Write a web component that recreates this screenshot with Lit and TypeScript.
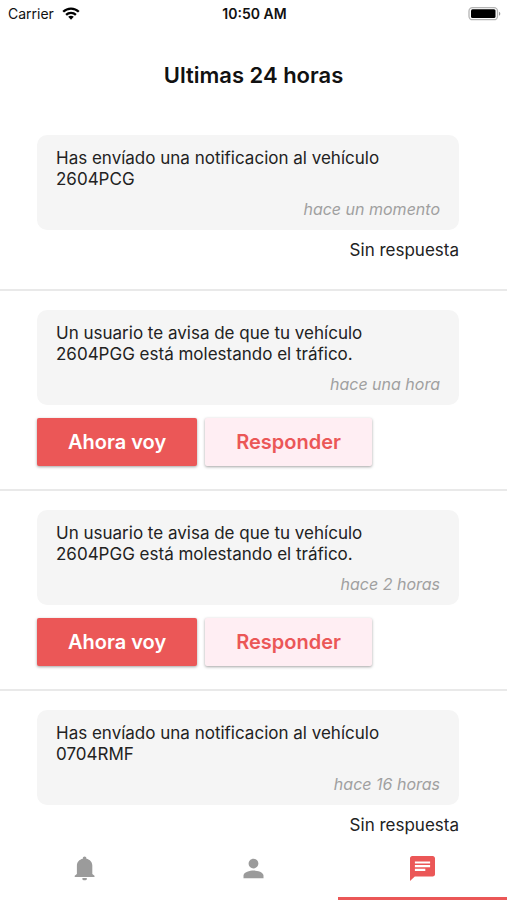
import { LitElement, html, css, svg, nothing } from "lit";
import { customElement, property, state } from "lit/decorators.js";
import { classMap } from "lit/directives/class-map.js";

interface Notice {
  text: string;
  when: string;
  received: boolean;
}

const NOTICES: Notice[] = [
  { text: "Has envíado una notificacion al vehículo 2604PCG", when: "hace un momento", received: false },
  { text: "Un usuario te avisa de que tu vehículo 2604PGG está molestando el tráfico.", when: "hace una hora", received: true },
  { text: "Un usuario te avisa de que tu vehículo 2604PGG está molestando el tráfico.", when: "hace 2 horas", received: true },
  { text: "Has envíado una notificacion al vehículo 0704RMF", when: "hace 16 horas", received: false },
];

@customElement("status-bar")
export class StatusBar extends LitElement {
  static styles = css`
    :host {
      display: grid;
      grid-template-columns: 1fr auto 1fr;
      align-items: center;
      height: 28px;
      padding: 0 6px 0 8px;
      font-size: 14px;
      line-height: 20px;
      color: #111;
    }
    .carrier {
      display: flex;
      align-items: center;
      gap: 8px;
    }
    .time {
      font-weight: 600;
    }
    .battery {
      justify-self: end;
      display: block;
    }
    .wifi {
      display: block;
    }
  `;

  render() {
    return html`
      <div class="carrier">
        <span>Carrier</span>
        <svg class="wifi" width="18" height="14" viewBox="0 0 18 14" fill="none" stroke="#000" stroke-width="2.3" aria-hidden="true">
          <path d="M1.2 4.8C5.5 .5 12.5 .5 16.8 4.8" />
          <path d="M4.1 7.8C6.8 5.2 11.2 5.2 13.9 7.8" />
          <path d="M9 12.7L6.2 9.8C7.7 8.4 10.3 8.4 11.8 9.8Z" fill="#000" stroke="none" />
        </svg>
      </div>
      <span class="time">10:50 AM</span>
      <svg class="battery" width="33" height="14" viewBox="0 0 33 14" aria-hidden="true">
        <rect x="1" y="0.7" width="28.5" height="12" rx="3.5" fill="#fff" stroke="#b4b4b4" stroke-width="1.3" />
        <rect x="3" y="2.2" width="24.5" height="8.9" rx="1.5" fill="#000" />
        <path d="M31 4.7C32.8 5.3 32.8 8.1 31 8.7Z" fill="#999" />
      </svg>
    `;
  }
}

@customElement("notice-item")
export class NoticeItem extends LitElement {
  @property({ attribute: false }) notice!: Notice;

  static styles = css`
    :host {
      display: block;
      padding: 19px 48px 23px 37px;
      font-size: 17px;
      line-height: 21px;
      color: #222;
    }
    .card {
      padding: 13px 19px 10px;
      border-radius: 10px;
      background: #f5f5f5;
    }
    .text {
      margin: 0;
    }
    .when {
      display: block;
      margin-top: 9px;
      text-align: right;
      font-size: 16px;
      font-style: italic;
      color: #a0a0a0;
    }
    .answer {
      margin: 10px 0 5px;
      text-align: right;
    }
    .actions {
      display: flex;
      flex-wrap: wrap;
      gap: 8px;
      margin-top: 13px;
    }
    .button {
      height: 48px;
      padding: 0 31px;
      border: 0;
      border-radius: 2px;
      font: inherit;
      font-size: 20px;
      font-weight: 600;
      box-shadow: 0 1px 3px rgba(0, 0, 0, 0.36);
      cursor: pointer;
    }
    .primary {
      background: #eb5757;
      color: #fff;
    }
    .secondary {
      background: #ffeef3;
      color: #eb5757;
    }
  `;

  render() {
    const { text, when, received } = this.notice;
    return html`
      <article class="card">
        <p class="text">${text}</p>
        <time class="when">${when}</time>
      </article>
      ${received
        ? html`<div class="actions">
            <button type="button" class="button primary">Ahora voy</button>
            <button type="button" class="button secondary">Responder</button>
          </div>`
        : html`<p class="answer">Sin respuesta</p>`}
    `;
  }
}

const TABS = [
  {
    label: "Avisos",
    icon: svg`<path d="M10 21h4.200v1.200c0 .6-.9 1-2.100 1s-2.100-.4-2.100-1zM12.100.4c-1 0-1.700.7-1.700 1.600v.6C6.900 3.300 4.700 5.800 4.700 9.200v8.100L2.600 18.900v1.200h19v-1.200l-2.100-1.600V9.200c0-3.400-2.200-5.900-5.700-6.600V2c0-.9-.7-1.600-1.700-1.600z" />`,
  },
  {
    label: "Perfil",
    icon: svg`<path d="M12 12c2.6 0 4.7-2.1 4.7-4.7S14.6 2.6 12 2.6 7.3 4.7 7.3 7.3 9.4 12 12 12zm0 1.8c-3.300 0-9.600 1.600-9.600 4.900v2.700h19.200v-2.700c0-3.300-6.300-4.900-9.600-4.900z" />`,
  },
  {
    label: "Mensajes",
    icon: svg`<path fill-rule="evenodd" d="M21.8 0H2.2C.9 0 0 1 0 2.2V24l4.600-4.400h17.200c1.300 0 2.200-1 2.200-2.200V2.200C24 1 23 0 21.800 0zM4.700 5.200h14.600v2.100H4.700zM4.700 8.700h14.600v2.200H4.700zM4.700 12.300h10v2.200h-10z" />`,
  },
];

@customElement("app-root")
export class AppRoot extends LitElement {
  @state() private active = 2;

  static styles = css`
    :host {
      display: flex;
      flex-direction: column;
      height: 100vh;
      background: #fff;
      font-family: Inter, "Liberation Sans", sans-serif;
    }
    .title {
      margin: 0;
      padding: 32px 16px 26px;
      text-align: center;
      font-size: 22px;
      line-height: 30px;
      font-weight: 600;
      color: #111;
    }
    .list {
      flex: 1;
      min-height: 0;
      margin: 0;
      padding: 0;
      list-style: none;
      overflow-y: auto;
      scrollbar-width: none;
    }
    .row + .row {
      border-top: 2px solid #e9e9e9;
    }
    .tabs {
      display: grid;
      grid-template-columns: repeat(3, 1fr);
      height: 60px;
      background: #fff;
    }
    .tab {
      display: flex;
      align-items: center;
      justify-content: center;
      padding: 0;
      border: 0;
      border-bottom: 3px solid transparent;
      background: none;
      color: #9b9b9b;
      cursor: pointer;
    }
    .active {
      border-bottom-color: #eb5757;
      color: #eb5757;
    }
    .icon {
      display: block;
      width: 25px;
      height: 25px;
      fill: currentColor;
    }
  `;

  render() {
    return html`
      <status-bar></status-bar>
      <h1 class="title">Ultimas 24 horas</h1>
      <ul class="list">
        ${NOTICES.map((notice) => html`<li class="row"><notice-item .notice=${notice}></notice-item></li>`)}
      </ul>
      <nav class="tabs">
        ${TABS.map(
          (tab, i) => html`
            <button
              type="button"
              class=${classMap({ tab: true, active: i === this.active })}
              aria-label=${tab.label}
              aria-current=${i === this.active ? "page" : nothing}
              @click=${() => (this.active = i)}
            >
              <svg class="icon" viewBox="0 0 24 24" aria-hidden="true">${tab.icon}</svg>
            </button>
          `,
        )}
      </nav>
    `;
  }
}
